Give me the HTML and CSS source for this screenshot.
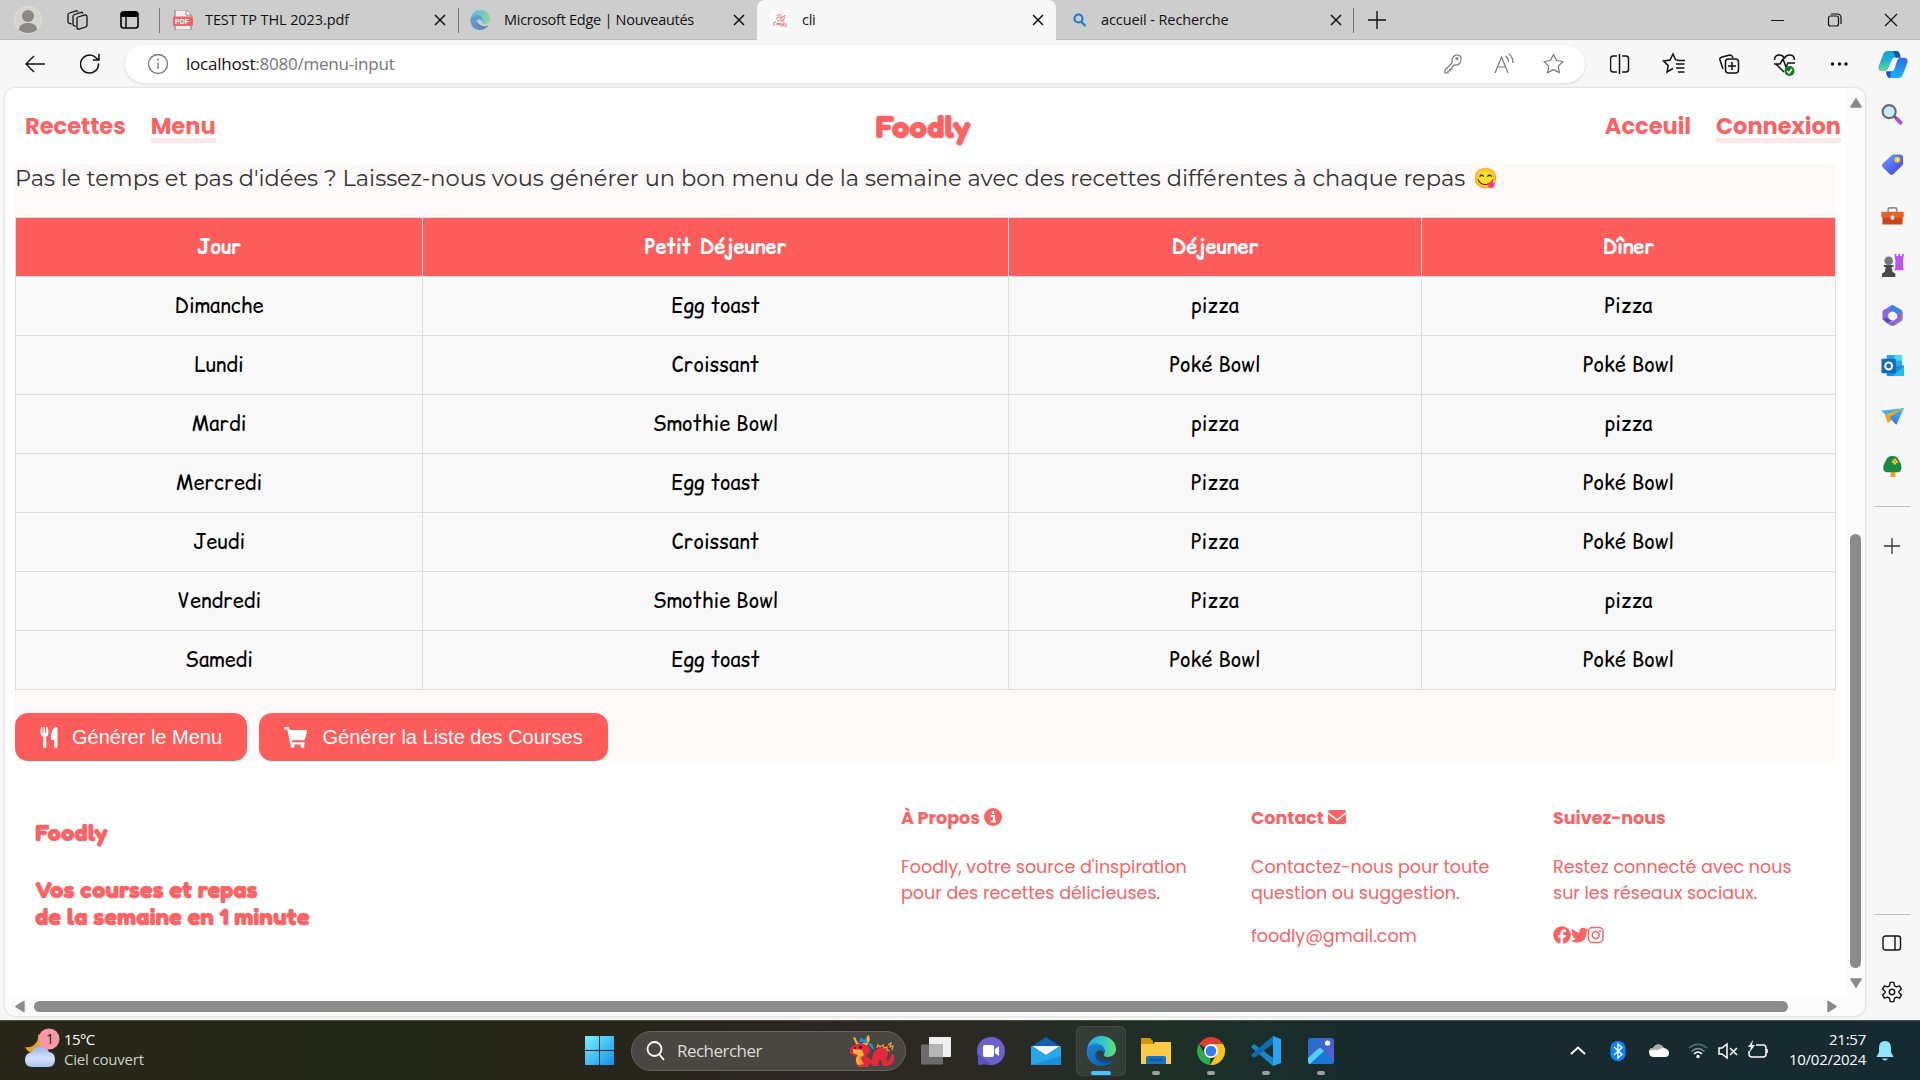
FILE: index.html
```html
<!DOCTYPE html>
<html lang="fr">
<head>
<meta charset="utf-8">
<title>cli</title>
<link rel="stylesheet" href="styles.css">
</head>
<body>
<svg class="defs" width="0" height="0">
  <defs>
    <linearGradient id="edge-a" x1="0" y1="0" x2="1" y2="0"><stop offset="0" stop-color="#2aa6e8"/><stop offset=".6" stop-color="#35c9c6"/><stop offset="1" stop-color="#6be063"/></linearGradient>
    <linearGradient id="edge-b" x1="0" y1="0" x2="1" y2="1"><stop offset="0" stop-color="#1b86d8"/><stop offset="1" stop-color="#0f55a6"/></linearGradient>
    <linearGradient id="win" x1="0" y1="0" x2="1" y2="1"><stop offset="0" stop-color="#7df0ff"/><stop offset="1" stop-color="#0c92f0"/></linearGradient>
    <linearGradient id="cop-a" x1="0" y1="0" x2="0" y2="1"><stop offset="0" stop-color="#129ddd"/><stop offset=".5" stop-color="#1db5c8"/><stop offset="1" stop-color="#6fdc8c"/></linearGradient>
    <linearGradient id="cop-b" x1="0" y1="0" x2="0" y2="1"><stop offset="0" stop-color="#2d6ce8"/><stop offset="1" stop-color="#17b4fa"/></linearGradient>
    <linearGradient id="tag" x1="0" y1="0" x2="1" y2="1"><stop offset="0" stop-color="#6aa9fa"/><stop offset="1" stop-color="#4434ec"/></linearGradient>
    <linearGradient id="cloud" x1="0" y1="0" x2="0" y2="1"><stop offset="0" stop-color="#8fb5ee"/><stop offset=".6" stop-color="#d5e4fb"/><stop offset="1" stop-color="#a8c5f4"/></linearGradient>
    <linearGradient id="photo" x1="0" y1="0" x2="1" y2="1"><stop offset="0" stop-color="#1b6fd0"/><stop offset="1" stop-color="#7058c8"/></linearGradient>
    <linearGradient id="plane" x1="0" y1="0" x2="0" y2="1"><stop offset="0" stop-color="#3cc4f2"/><stop offset="1" stop-color="#2f6df0"/></linearGradient>
    <symbol id="i-x" viewBox="0 0 12 12"><path d="M1 1l10 10M11 1L1 11" fill="none" stroke="#111" stroke-width="1.5"/></symbol>
    <symbol id="i-edge" viewBox="0 0 30 30">
      <path d="M1 14C2 5 8 0 15 0c9 0 15 6 15 13 0 5-4 8-8 8-3 0-5-1-4-3 2-3 0-8-6-8C6 10 2 12 1 17z" fill="url(#edge-a)"/>
      <path d="M1 13C3 9 7 7 12 8c5 1 8 5 6 9-1-3-6-4-8 0-2 5 3 10 9 10 4 0 7-2 9-4-3 5-8 7-13 7C6 30-1 22 1 13z" fill="url(#edge-b)"/>
      <path d="M10 17c-2 5 3 10 9 10 4 0 7-2 9-4-4 2-9 2-12 0-3-1-4-4-6-6z" fill="#124a94"/>
    </symbol>
    <symbol id="i-tree" viewBox="0 0 24 24"><path d="M10 16h5v7h-5z" fill="#f0a020"/><path d="M12 1c4 0 6 2 7 5 2 3 3 6 2 9-1 3-3 3-5 3H8c-3 0-5-1-5.500-3C2 12 3 9 5 6c1-3 3-5 7-5z" fill="#1d8a42"/><path d="M14.500 4v6M11.500 7h6" stroke="#ffc83d" stroke-width="2.600"/><circle cx="14.500" cy="7" r="1.200" fill="#f08a00"/></symbol>
  </defs>
</svg>

<header class="tabs">
  <svg class="profile" viewBox="0 0 28 28"><circle cx="14" cy="14" r="13.5" fill="#d5d3d0" stroke="#e2e0dd"/><circle cx="14" cy="10" r="6" fill="#8b8783"/><path d="M5 24c0-5 4-7 9-7s9 2 9 7c-5 4-13 4-18 0z" fill="#8b8783"/></svg>
  <svg class="workspaces" viewBox="0 0 22 22" fill="none" stroke="#111" stroke-width="1.300"><path d="M12 8l7-2q2-.3 2 2v8q0 1.500-1.500 2L13 20q-2 .5-2-1.500V9.500q0-1.200 1-1.500z"/><path d="M10 17.500l-1.500-.5Q7 16.500 7 15V7.500Q7 6 8.500 5.500L15 3.500q1.500-.3 2 1"/><path d="M5.500 15l-2-.5Q2 14 2 12.500V6q0-1.500 1.500-2L10 2q1.500-.3 2 .5"/></svg>
  <svg class="tabmenu" viewBox="0 0 20 20"><rect x="1" y="2" width="17" height="16" rx="2.5" fill="none" stroke="#000" stroke-width="1.6"/><path d="M1 7V4q0-3 3-3h11q3 0 3 3v3z"/><path d="M6 7v11" stroke="#000" stroke-width="1.4"/></svg>
  <div class="tab tab-pdf">
    <svg class="fav" viewBox="0 0 20 20"><path d="M2 0h11l5 5v15H2z" fill="#eee" stroke="#8d8d8d" stroke-width="1.2"/><path d="M13 0v5h5" fill="#fff" stroke="#8d8d8d"/><rect y="6.500" width="20" height="9.500" rx="1" fill="#e66a6c"/><text x="2" y="14" class="pdf-label">PDF</text></svg>
    <span class="title t-pdf">TEST TP THL 2023.pdf</span><svg class="x"><use href="#i-x"/></svg>
  </div>
  <div class="tab tab-news">
    <svg class="fav faded" viewBox="0 0 30 30"><use href="#i-edge"/></svg>
    <span class="title t-news">Microsoft Edge | Nouveautés</span><svg class="x"><use href="#i-x"/></svg>
  </div>
  <div class="tab tab-cli">
    <svg class="fav" viewBox="0 0 20 20"><path d="M0 0h20v20H0z" fill="#fff"/><g fill="none" stroke="#f77f80" stroke-width="1.100"><path d="M7 6q3-3 4 0t4-1M6 9q4-4 5 0 2 3 4-2M7 10q3 2 7 0M4 12v4M4 12h2M7 14.500h3v-1H7zM11 14h2v2h-2zM14 12v4M16 13v3l-1 1"/></g></svg>
    <span class="title t-cli">cli</span><svg class="x"><use href="#i-x"/></svg>
  </div>
  <div class="tab tab-search">
    <svg class="fav-s" viewBox="0 0 13 14"><circle cx="5.500" cy="5.500" r="4" fill="none" stroke="#1a76cf" stroke-width="2"/><path d="M8.500 9l4 4" stroke="#1a76cf" stroke-width="2.200"/></svg>
    <span class="title t-search">accueil - Recherche</span><svg class="x"><use href="#i-x"/></svg>
  </div>
  <svg class="newtab" viewBox="0 0 18 18"><path d="M9 0v18M0 9h18" stroke="#111" stroke-width="1.400"/></svg>
  <svg class="winctl" viewBox="0 0 130 16" fill="none" stroke="#111" stroke-width="1.200"><path d="M0 8.500h13M114 2l12 12M126 2L114 14"/><rect x="57.500" y="4" width="10" height="10" rx="2"/><path d="M60 2h6q4 0 4 4v6"/></svg>
</header>

<section class="toolbar">
  <svg class="back" viewBox="0 0 20 18" fill="none" stroke="#111" stroke-width="1.400"><path d="M20 9H1M9 1L1 9l8 8"/></svg>
  <svg class="reload" viewBox="0 0 20 20" fill="none" stroke="#111" stroke-width="1.500"><path d="M18.500 9.500a9 9 0 1 1-2.800-6L18.500 6M19 0v6h-6"/></svg>
  <div class="address">
    <svg class="info" viewBox="0 0 22 22"><circle cx="11" cy="11" r="9.500" fill="none" stroke="#777" stroke-width="1.300"/><path d="M11 9.500v6.500" stroke="#777" stroke-width="1.400"/><circle cx="11" cy="6.500" r="1" fill="#777"/></svg>
    <span class="url"><span class="host">localhost</span><span class="path">:8080/menu-input</span></span>
    <svg class="addr-icons" viewBox="0 0 120 22" fill="none" stroke="#777" stroke-width="1.200"><path d="M8 10q-1-6 4-8 6 0 5 5-1 6-7 5l-2 2v2H6v2H4v2H1v-3z"/><circle cx="13" cy="5.500" r="1"/><path d="M51 20L57.500 4 64 20M53.500 14h8M61.500 3q3 2 3 6M65 1q4 3 4 9"/><path d="M109.500 1.500l3 6 6.500 1-4.700 4.600 1.100 6.600-5.900-3.100-5.900 3.100 1.100-6.600L100 8.500l6.500-1z" stroke-linejoin="round"/></svg>
  </div>
  <svg class="tools" viewBox="0 0 240 26" fill="none" stroke="#111" stroke-width="1.500">
    <path d="M7 5H3Q.5 5 .5 8v10q0 3 2.500 3h4M12 5h4q2.500 0 2.500 3v10q0 3-2.500 3h-4M9.500 3v20"/>
    <path d="M69 9.500l-3.500-.8L63 3l-3 6-6.500 1 4.700 4.600L57 21l6-3.500M66 13h8.500M66 17h8.500M68 21h6.500M69 9.500h6"/>
    <path d="M113 18l-3-9q-1-2 2-3l8-2q2 0 3 3"/><rect x="115.500" y="8" width="13" height="14" rx="3"/><path d="M122 11v8M118 15h8"/>
    <path d="M174 21l-8-8M164.500 9q0-5 5-5 3 0 5 3 2-3 5-3 5 0 5 5M164 13h6l3-5 3 8 2-4h7"/><circle cx="179.500" cy="20" r="5" fill="#127a19" stroke="none"/><path d="M177 20l2 2 3-4" stroke="#fff"/>
    <g fill="#111" stroke="none"><circle cx="222.500" cy="13" r="1.700"/><circle cx="229.500" cy="13" r="1.700"/><circle cx="236" cy="13" r="1.700"/></g>
  </svg>
  <svg class="copilot" viewBox="0 0 30 28"><path d="M5 3q1-3 5-3h8q3 0 4 4l-5 3q-3 0-4 4l-3 7q-1 3-4 3H4q-5 0-4-5z" fill="url(#cop-a)"/><path d="M25 25q-1 3-5 3h-8q-3 0-4-5l5-2q3 0 4-4l2-6q1-4 4-4h3q5 0 4 5z" fill="url(#cop-b)"/><path d="M15 0h4q3 0 4 7h-5z" fill="#14559c"/><path d="M8 21h5l-1 7q-3 0-4-5z" fill="#1a50d8"/></svg>
</section>

<div class="middle">
  <div class="frame">
    <div class="page">
      <nav class="nav">
        <div class="links"><a>Recettes</a><a class="on">Menu</a></div>
        <div class="logo">Foodly</div>
        <div class="links right"><a>Acceuil</a><a class="on">Connexion</a></div>
      </nav>
      <main class="main">
        <p class="intro">Pas le temps et pas d'idées ? Laissez-nous vous générer un bon menu de la semaine avec des recettes différentes à chaque repas <span class="emoji">😋</span></p>
        <table class="menu">
          <colgroup><col class="c1"><col class="c2"><col class="c3"><col class="c4"></colgroup>
          <thead><tr><th>Jour</th><th>Petit Déjeuner</th><th>Déjeuner</th><th>Dîner</th></tr></thead>
          <tbody>
            <tr><td>Dimanche</td><td>Egg toast</td><td>pizza</td><td>Pizza</td></tr>
            <tr><td>Lundi</td><td>Croissant</td><td>Poké Bowl</td><td>Poké Bowl</td></tr>
            <tr><td>Mardi</td><td>Smothie Bowl</td><td>pizza</td><td>pizza</td></tr>
            <tr><td>Mercredi</td><td>Egg toast</td><td>Pizza</td><td>Poké Bowl</td></tr>
            <tr><td>Jeudi</td><td>Croissant</td><td>Pizza</td><td>Poké Bowl</td></tr>
            <tr><td>Vendredi</td><td>Smothie Bowl</td><td>Pizza</td><td>pizza</td></tr>
            <tr><td>Samedi</td><td>Egg toast</td><td>Poké Bowl</td><td>Poké Bowl</td></tr>
          </tbody>
        </table>
        <div class="actions">
          <button class="btn b-menu"><svg class="i-fork" viewBox="0 0 18 21" fill="#fff"><path d="M1 0h1.500v6h1V0H5v6h1V0h1.600q1 4 .8 7-.3 2-2.400 3l.5 9q0 2-1.700 2T3 19l.4-9Q1 9 .6 7 .4 4 1 0zM17.500 1v18q0 2-1.700 2T14 19l.4-6H11q-.8-5 1-9 2-4 4.500-4 1 0 1 1z"/></svg>Générer le Menu</button>
          <button class="btn b-list"><svg class="i-cart" viewBox="0 0 23 21" fill="#fff"><path d="M0 1q0-1 1-1h3q1.200 0 1.500 1.500L5.800 3H22q1.300 0 1 1.300l-2 8q-.3 1-1.500 1H8l.4 2H20q1 0 .8 1.200-.2.900-1.200.9H7.500q-1.200 0-1.400-1.200L3.300 2.600H1Q0 2.500 0 1z"/><circle cx="8.500" cy="19" r="2"/><circle cx="18.500" cy="19" r="2"/></svg>Générer la Liste des Courses</button>
        </div>
      </main>
      <footer class="footer">
        <div class="brand"><div class="b1">Foodly</div><div>Vos courses et repas</div><div>de la semaine en 1 minute</div></div>
        <div class="col">
          <h4><span>À Propos</span><svg class="hi" viewBox="0 0 18 18"><circle cx="9" cy="9" r="9" fill="#fa6263"/><path d="M9 3v3M6.500 8h3.500v5M6.500 13.500h5.500" stroke="#fff" stroke-width="2.200" fill="none"/></svg></h4>
          <p>Foodly, votre source d'inspiration</p><p>pour des recettes délicieuses.</p>
        </div>
        <div class="col">
          <h4><span>Contact</span><svg class="hi" viewBox="0 0 18 18"><path d="M2 2h14q2 0 2 2l-9 7L0 4q0-2 2-2zM0 6l9 7 9-7v8q0 2-2 2H2q-2 0-2-2z" fill="#fa6263"/></svg></h4>
          <p>Contactez-nous pour toute</p><p>question ou suggestion.</p><p class="mail">foodly@gmail.com</p>
        </div>
        <div class="col">
          <h4><span>Suivez-nous</span></h4>
          <p>Restez connecté avec nous</p><p>sur les réseaux sociaux.</p>
          <svg class="social" viewBox="0 0 51 18"><circle cx="9" cy="9" r="8.800" fill="#fa6263"/><path d="M7.500 18v-6.500H5V9h2.500V7q0-3.500 3.500-3.500h2V6h-1.500q-1.300 0-1.300 1.300V9H13l-.5 2.500h-2.300V18z" fill="#fff"/><path d="M18 14.500q3 .2 5-1.400-2.500-.3-3.300-2.600h1.500Q18.600 9.500 18.500 7l1.500.4Q17.500 5 19 2.500q3 3.700 7.500 4Q26 2 30 1.800q1.500 0 2.600 1.200l2.300-.9q-.3 1.200-1.600 2l2-.5-1.700 1.900Q33.800 16.500 23.500 16.500q-3 0-5.500-2z" fill="#fa6263"/><rect x="35.500" y="1.500" width="14.500" height="15" rx="4" fill="none" stroke="#fa6263" stroke-width="1.500"/><circle cx="42.700" cy="9" r="3.500" fill="none" stroke="#fa6263" stroke-width="1.500"/><circle cx="47" cy="5" r="1" fill="#fa6263"/></svg>
        </div>
      </footer>
    </div>
    <div class="vscroll"><svg class="ar" viewBox="0 0 12 10"><path d="M6 1l5 8H1z"/></svg><div class="vthumb"></div><svg class="ar" viewBox="0 0 12 10"><path d="M6 9l5-8H1z"/></svg></div>
    <div class="hscroll"><svg class="ah" viewBox="0 0 10 12"><path d="M1 6l8-5v10z"/></svg><div class="hthumb"></div><svg class="ah" viewBox="0 0 10 12"><path d="M9 6L1 1v10z"/></svg></div>
  </div>
  <aside class="side">
    <svg viewBox="0 0 24 24"><path d="M16.500 16.500l4 4" stroke="#c83df0" stroke-width="4" stroke-linecap="round"/><path d="M13 13l3 3" stroke="#555" stroke-width="2.500"/><circle cx="8.500" cy="9" r="6.800" fill="#cdeaff" stroke="#6b6b6b" stroke-width="2.200"/></svg>
    <svg viewBox="0 0 24 24"><path d="M13.500 1.500H20q3 0 3 3V11q0 1-1 2l-9 9q-2 2-4 0l-7-7q-2-2 0-4l9-8.500q1-1 2.500-1z" fill="url(#tag)"/><circle cx="17" cy="7" r="2.200" fill="#f4f0e0" stroke="#f8c71e" stroke-width="2"/></svg>
    <svg viewBox="0 0 24 24"><path d="M7.500 8V5.500Q7.500 4 9 4h6q1.500 0 1.500 1.500V8" fill="none" stroke="#8c9093" stroke-width="1.800"/><rect x="1.500" y="11" width="21" height="10.500" rx="1" fill="#c8461b"/><rect x=".3" y="8" width="23.400" height="6" rx="1" fill="#e4612a"/><rect x="10" y="12" width="4" height="4.500" rx="1" fill="#d9dcde"/></svg>
    <svg viewBox="0 0 24 24"><path d="M14 0h2v2h2V0h2v2h2V0h2l-1 6v8l1 3h-10l1-3V6z" fill="#c050f5"/><circle cx="8" cy="7" r="4.500" fill="#777"/><path d="M3 11.500h10v2h-2l1 5 3 2V24H1v-3.500l3-2 1-5H3z" fill="#4a4a4a"/></svg>
    <svg viewBox="0 0 24 24"><path d="M12 1L3 6q-1.500 1-1.500 2.500V16L8 17V11q0-1.500 1-2l7-4z" fill="#8a6ae0"/><path d="M10 2q2-2 4 0l8 4.500V16l-5-3v-2L12 7.500 9 9z" fill="#3a86e0"/><path d="M22.500 8v7.500q0 1.500-1.500 2.500l-7 4.500q-2 1-4 0L5 19l7-1 5-3.500V10z" fill="#8f6bc4"/><path d="M1.500 16l5-2 6 3-6 3z" fill="#5a50c0"/><circle cx="12" cy="12.500" r="4.500" fill="#f7f7f7"/></svg>
    <svg viewBox="0 0 24 24"><path d="M6 1h16v12H6z" fill="#28a8ea"/><path d="M14 1h8v6h-8z" fill="#50d9ff"/><path d="M6 12h18v11H6z" fill="#1490df"/><path d="M12 23l12-10v10z" fill="#28b8f4"/><rect x=".5" y="5" width="15" height="15" rx="1" fill="#0f6cbd"/><circle cx="8" cy="12.500" r="3.600" fill="none" stroke="#fff" stroke-width="2.100"/></svg>
    <svg viewBox="0 0 24 24"><path d="M0 6l24-3-8 17.500-8-8z" fill="url(#plane)"/><path d="M24 3L4 10l3 9 3-7z" fill="#f2a51c"/><path d="M10 12l-3 7 4-4z" fill="#d88510"/></svg>
    <svg viewBox="0 0 24 24"><use href="#i-tree"/></svg>
    <div class="rule"></div>
    <svg class="plus" viewBox="0 0 16 16"><path d="M8 0v16M0 8h16" stroke="#333" stroke-width="1.300"/></svg>
    <div class="rule low"></div>
    <svg class="panel" viewBox="0 0 20 16" fill="none" stroke="#111" stroke-width="1.400"><rect x="1" y="1" width="17.500" height="14" rx="2.500"/><path d="M13 1v14"/></svg>
    <svg class="gear" viewBox="0 0 24 24" fill="none" stroke="#111" stroke-width="1.500" stroke-linejoin="round"><path d="M10 1.500h4l.8 3.800 2 1.200 3.600-1.200 2 3.500-2.800 2.400v1.600l2.800 2.400-2 3.500-3.600-1.200-2 1.200-.8 3.800h-4l-.8-3.800-2-1.200-3.600 1.200-2-3.500 2.800-2.400v-1.600L1.600 8.800l2-3.500 3.600 1.200 2-1.200z"/><circle cx="12" cy="12" r="3"/></svg>
  </aside>
</div>

<footer class="taskbar">
  <div class="weather">
    <svg class="wx" viewBox="0 0 36 42"><path d="M14 7q1 6-3 10-4 4-10 3 4 8 13 6 6-4 6-12z" fill="#f0a020"/><path d="M8 40q-7 0-7-7t7-8q2-6 8-6 7 0 9 6 6 1 6 7 0 8-7 8z" fill="url(#cloud)"/><circle cx="25" cy="12" r="10.500" fill="#ff96a4"/><text x="22" y="17" class="badge">1</text></svg>
    <div class="wtext"><span class="deg">15°C</span><span class="sky">Ciel couvert</span></div>
  </div>
  <div class="dock">
    <svg class="start" viewBox="0 0 30 30" fill="url(#win)"><path d="M1 1h13.500v13.500H1zM15.500 1H29v13.500H15.500zM1 15.500h13.500V29H1zM15.500 15.500H29V29H15.500z"/></svg>
    <div class="search"><svg class="glass" viewBox="0 0 20 20" fill="none" stroke="#fff" stroke-width="1.800"><circle cx="8.500" cy="8" r="7"/><path d="M13 13l5 6"/></svg><span>Rechercher</span>
      <svg class="dragon" viewBox="0 0 44 32"><path d="M7 11L3 3l2-1 3 6 3 1 5-2 1-6 2-1 1 5-3 6z" fill="#f3b02c"/><path d="M9 7l2-5 3 3 2-3 1 5 5 2 3 6-4-2-3-5z" fill="#1d8fe0"/><path d="M2 12q4-4 11-3 7 1 7 8l-4 4 6 4q0-9 7-12 8-2 9 5 0 4-2 6l2 2q4-3 3-7l3 1q1 7-4 10l-4 1h-3l-2-6-3 1 1 5h-6l-3-3-2 4-8 1q-6-4-4-11l-5-3q-3-2-1-6z" fill="#e4283e"/><path d="M3 14l9 1 2 5-4 3 4 6-6 1q-4-5 0-10l-5-2z" fill="#f6b637"/><path d="M8 22h4M8 25h4M9 28h4" stroke="#d8802c"/><circle cx="10.500" cy="12" r="1.500" fill="#123"/><circle cx="5" cy="13" r="1" fill="#123"/><path d="M27 13l1-3 2 2 3-2 1 3 3-1v3l3 1M38 10l3-2-1 4 3-1-1 4" stroke="#ff9a3c" stroke-width="1.300" fill="none"/></svg></div>
    <div class="app"><svg viewBox="0 0 30 30"><rect x="8" y="1" width="22" height="20" rx="1" fill="#f0f0f0"/><rect x="0" y="8.500" width="22" height="20" rx="1" fill="#6c6c6c"/><path d="M8 8.500h14V21H8z" fill="#b5b5b5"/></svg></div>
    <div class="app"><svg viewBox="0 0 30 30"><circle cx="15" cy="15" r="14" fill="#6a62cc"/><path d="M2 17v12l12-1z" fill="#5a50c0"/><rect x="7" y="9" width="11" height="12" rx="2" fill="#fff"/><path d="M19 13l4-3v10l-4-3z" fill="#fff"/></svg></div>
    <div class="app"><svg viewBox="0 0 30 30"><path d="M0 11L15 1l15 10-3 8H3z" fill="#0f5eb0"/><path d="M0 10l15 9 15-9v19H0z" fill="#28a8ea"/><path d="M1 10h28l-14 9z" fill="#f3f3f3"/><path d="M0 29l30-9v9z" fill="#1b8fdf"/></svg></div>
    <div class="app active"><svg viewBox="0 0 30 30"><use href="#i-edge"/></svg><i></i></div>
    <div class="app"><svg viewBox="0 0 30 30"><path d="M0 3q0-1 1-1h8l3 3v8H0z" fill="#d9940a"/><path d="M0 8h12l2-2h16v22H0z" fill="#fdca45"/><path d="M5 28v-6q0-2 2-2h16q2 0 2 2v6z" fill="#1673c4"/><path d="M9 24h12" stroke="#0c4f92" stroke-width="1.500"/></svg><i></i></div>
    <div class="app"><svg viewBox="0 0 30 30"><path d="M15 15L2.900 8A14 14 0 0 1 27.100 8H15z" fill="#e33b2e"/><path d="M15 15l-1 14A14 14 0 0 1 2.900 8l6 10z" fill="#2da94f"/><path d="M15 8h12.100A14 14 0 0 1 14 29l7-11z" fill="#fcc31e"/><circle cx="15" cy="15" r="7" fill="#fff"/><circle cx="15" cy="15" r="5.300" fill="#2f7de9"/></svg><i></i></div>
    <div class="app"><svg viewBox="0 0 30 30"><path d="M0 11l3-3 19 14v8z" fill="#1686d0"/><path d="M0 19l3 3L22 8V0z" fill="#0f6cb4"/><path d="M22 0l8 3v24l-8 3z" fill="#2ba3f0"/></svg><i></i></div>
    <div class="app"><svg viewBox="0 0 30 30"><rect x="2" y="2" width="26" height="26" rx="3" fill="url(#photo)"/><path d="M2 22l10-9q2-2 4 0l12 12q0 3-3 3H5q-3 0-3-3z" fill="#1679d8"/><path d="M2 22l10-9q2-2 4 0l2 2L4 28q-2 0-2-3z" fill="#4fd0ff"/><circle cx="21.500" cy="7" r="2.600" fill="#fff"/></svg><i></i></div>
  </div>
  <div class="tray">
    <svg class="trayicons" viewBox="0 0 200 24" fill="none" stroke="#fff" stroke-width="1.500">
      <path d="M1 15l7-6.500L15 15" stroke-width="2"/>
      <rect x="40.500" y="2" width="15" height="20" rx="7" fill="#0a84ff" stroke="none"/><path d="M44 8l8 7.500-4 3.500V5l4 3.500L44 16" stroke-width="1.400"/>
      <path d="M84 18q-5 0-5-5 0-4 4-4 3-5 8-3l3 3q5 1 5 5t-4 4z" fill="#fff" stroke="none"/><path d="M79 12q1-3 4-3 3-5 8-3l3 3q-4 0-6 2-4-1-9 1z" fill="#aaa" stroke="none"/>
      <path d="M119 9q9-7.500 18 0" stroke="#5c6b70"/><path d="M121.500 12.500q6.500-6 13 0" stroke="#849094"/><path d="M124 15q4-4 8 0"/><circle cx="128" cy="17.500" r="1.700" fill="#fff" stroke="none"/>
      <path d="M149 9h3l5-4v14l-5-4h-3zM160 9l7 7M167 9l-7 7"/>
      <path d="M186 6h7q3 0 3 3v6q0 3-3 3h-11q-3 0-3-3v-3M197 10v4"/><path d="M183 1l-5 7h3l-2 6 6-8h-3z" fill="#fff" stroke="none"/>
    </svg>
    <div class="clock"><span class="time">21:57</span><span class="date">10/02/2024</span></div>
    <svg class="bell" viewBox="0 0 18 20" fill="#8fe5ff"><path d="M9 0q6 0 6 7v4l2.500 5H.5L3 11V7q0-7 6-7zM6 17.500h6q-1 2-3 2t-3-2z"/></svg>
  </div>
</footer>
</body>
</html>
```
FILE: styles.css
```css
* { box-sizing: border-box; }
body { margin: 0; width: 1920px; height: 1080px; overflow: hidden; display: flex; flex-direction: column; background: #f7f7f7; font-family: "Open Sans", sans-serif; color: #111; }
svg { display: block; flex: none; }
p, h4 { margin: 0; }
.defs { position: absolute; }

/* tab strip */
.tabs { height: 40px; flex: none; display: flex; align-items: center; background: #cdcdcd; box-shadow: inset 0 -1px #bbb; }
.profile { width: 28px; height: 28px; margin-left: 14px; }
.workspaces { width: 22px; height: 22px; margin-left: 24px; }
.tabmenu { width: 20px; height: 20px; margin-left: 32px; }
.tab { height: 40px; display: flex; align-items: center; }
.tab .x { width: 12px; height: 12px; margin-left: auto; margin-right: 12.5px; }
.tab-pdf, .tab-news { background: linear-gradient(#777, #777) 0 8px / 1px 25px no-repeat; }
.tab-pdf { width: 299px; margin-left: 19px; padding-left: 14px; }
.tab-news { width: 299px; padding-left: 12px; }
.tab-cli { width: 299px; background: #f7f7f7; border-radius: 8px 8px 0 0; padding-left: 13px; }
.tab-search { width: 298px; padding-left: 17px; background: linear-gradient(#777, #777) 297px 8px / 1px 25px no-repeat; }
.fav { width: 20px; height: 20px; }
.fav-s { width: 13px; height: 14px; }
.faded { opacity: .6; }
.pdf-label { font: 700 7px "Liberation Sans", sans-serif; fill: #fff; }
.title { font-size: 14.5px; line-height: 20px; white-space: nowrap; margin-left: 12px; }
.t-pdf { letter-spacing: -.09px; }
.t-news { margin-left: 14px; letter-spacing: -.27px; }
.t-search { margin-left: 15px; letter-spacing: -.1px; }
.t-cli { letter-spacing: -.3px; }
.newtab { width: 18px; height: 18px; margin-left: 14px; }
.winctl { width: 130px; height: 16px; margin-left: auto; margin-right: 19px; }

/* toolbar */
.toolbar { height: 48px; flex: none; display: flex; align-items: center; }
.back { width: 20px; height: 18px; margin-left: 25px; }
.reload { width: 20px; height: 20px; margin-left: 35px; }
.address { width: 1460px; height: 38px; margin-left: 25px; margin-top: -1px; border-radius: 19px; background: #fff; box-shadow: 0 1px 3px #0002; display: flex; align-items: center; }
.info { width: 22px; height: 22px; margin-left: 22px; }
.url { font-size: 17px; margin-left: 17px; white-space: nowrap; letter-spacing: -.22px; line-height: 22px; }
.path { color: #767676; }
.addr-icons { width: 120px; height: 22px; margin-left: auto; margin-right: 21px; }
.tools { width: 240px; height: 26px; margin-left: 25px; }
.copilot { width: 30px; height: 27px; margin-left: 28px; }

/* browser frame */
.middle { height: 932px; flex: none; display: flex; }
.frame { width: 1860px; height: 928px; margin-left: 5px; background: #fcfcfc; border-radius: 10px; overflow: hidden; box-shadow: 0 0 3px #0003; display: grid; grid-template: 909px 19px / 1841px 19px; }
.page { background: #fff; overflow: hidden; }
.vscroll { display: flex; flex-direction: column; align-items: center; padding: 10px 0 9px; grid-column: 2; }
.hscroll { display: flex; align-items: center; padding: 0 9px 0 10px; }
.ar { width: 14px; height: 10px; }
.ah { width: 10px; height: 13px; }
.ar path, .ah path { fill: #8b8b8b; stroke: #8b8b8b; stroke-width: 1.5; stroke-linejoin: round; }
.vthumb { width: 11px; height: 434px; border-radius: 6px; background: #8b8b8b; margin: auto 0 10px; }
.hthumb { height: 11px; width: 1754px; border-radius: 6px; background: #8b8b8b; margin: 0 auto 0 9px; }

/* site navigation */
.nav { height: 76px; display: grid; grid-template-columns: 1fr auto 1fr; padding: 0 5px 0 20px; color: #fa6263; }
.links { display: flex; gap: 25px; padding-top: 26px; font: 700 22.5px/25px Poppins, Inter, sans-serif; }
.links a { height: 29px; }
.links .on { border-bottom: 5px solid #ffe8ea; }
.right { justify-content: flex-end; }
.logo, .brand { font-family: Fredoka, Inter, sans-serif; font-weight: 700; color: #fa6263; }
.logo { font-size: 31.5px; line-height: 36px; padding-top: 20px; margin-left: -20px; -webkit-text-stroke: .5px #fa6263; }

/* menu page */
.main { width: 1821px; height: 597px; margin-left: 10px; background: #fdf9f8; }
.intro { font: 400 22.5px/27px Montserrat, Inter, sans-serif; color: #333; height: 53px; padding-top: 1px; white-space: nowrap; }
.emoji { font-size: 20px; margin-left: 2px; vertical-align: 1px; line-height: 20px; }
.menu { width: 1821px; table-layout: fixed; border-collapse: collapse; font: 400 20px/26px "Comic Relief", "Comic Neue", cursive; color: #000; text-align: center; }
.menu th, .menu td { height: 59px; padding: 0; border: 1px solid #ddd; }
.menu th { background: #ff5c5c; color: #fff; font-weight: 700; }
.menu td { background: #f8f8f8; }
.c1 { width: 407px; }
.c2 { width: 586px; }
.c3 { width: 413px; }
.c4 { width: 414px; }
.actions { display: flex; gap: 12px; margin-top: 23px; }
.btn { height: 48px; border: 0; border-radius: 13px; background: #ff5c5c; color: #fff; font: 400 20px/24px "Liberation Sans", sans-serif; display: flex; align-items: center; padding: 0 0 0 25px; text-align: left; white-space: nowrap; }
.b-menu { width: 232px; gap: 14px; }
.b-list { width: 349px; gap: 15.5px; }
.i-fork { width: 18px; height: 21px; }
.i-cart { width: 23px; height: 21px; }

/* site footer */
.footer { height: 236px; display: grid; grid-template-columns: 866px 350px 302px 1fr; padding-left: 30px; color: #fa6263; }
.brand { font-size: 24px; line-height: 27px; padding-top: 58px; white-space: nowrap; -webkit-text-stroke: .4px #fa6263; }
.b1 { margin-bottom: 30px; }
.col { padding-top: 44px; font: 400 17.5px/26px Poppins, Inter, sans-serif; }
.col h4 { font-weight: 700; font-size: 17.5px; display: flex; align-items: center; gap: 4.5px; margin-bottom: 23px; }
.hi { width: 18px; height: 18px; margin-top: -2px; }
.col p { white-space: nowrap; }
.mail { margin-top: 17px; }
.social { width: 51px; height: 18px; margin-top: 20px; }

/* edge sidebar */
.side { width: 54px; display: flex; flex-direction: column; align-items: center; padding-top: 15px; }
.side svg { width: 23px; height: 23px; margin-bottom: 27.300px; }
.side .rule { width: 35px; height: 1px; background: #bbb; margin-top: 1px; }
.side .plus { width: 16px; height: 16px; margin: 31px 0 0; }
.side .low { margin-top: 360px; }
.side .panel { width: 20px; height: 16px; margin: 20px 0 0; }
.side .gear { width: 22px; height: 22px; margin: 30px 0 0; }

/* taskbar */
.taskbar { height: 60px; flex: none; display: flex; align-items: center; color: #fff; background: linear-gradient(90deg, #29271a 0, #232817 20%, #28261a 32%, #2c2624 42%, #2a2a24 52%, #1c3028 62%, #172b2e 72%, #162b31 100%); border-top: 1px solid #4a4d45; }
.weather { display: flex; width: 584px; padding-left: 24px; }
.wx { width: 36px; height: 42px; margin-top: -5px; }
.badge { font: 14px "Open Sans", sans-serif; fill: #222; }
.wtext { display: flex; flex-direction: column; font-size: 15px; line-height: 20px; padding-left: 4px; margin-top: -3px; }
.deg { letter-spacing: -.6px; }
.sky { letter-spacing: -.18px; color: #cfcfca; }
.dock { display: flex; align-items: center; }
.start { width: 31px; height: 31px; }
.search { width: 275px; height: 40px; margin: 0 2px 0 16px; border-radius: 20px; background: #4a4642; border: 1px solid #66625e; display: flex; align-items: center; padding-left: 14px; font-size: 17px; letter-spacing: -.52px; color: #ddd; }
.glass { width: 20px; height: 20px; margin-right: 11px; }
.dragon { width: 44px; height: 32px; margin-left: auto; margin-right: 11px; }
.app { width: 50px; height: 50px; margin: 0 2.500px; border-radius: 6px; display: flex; flex-direction: column; align-items: center; padding-top: 10px; }
.app svg { width: 30px; height: 30px; }
.app i { width: 8px; height: 4px; border-radius: 2px; background: #9aa09d; margin-top: 5px; }
.active { background: #ffffff14; box-shadow: inset 0 0 0 1px #ffffff12; }
.active i { width: 20px; background: #4cc2ff; }
.tray { display: flex; align-items: center; margin-left: auto; margin-right: 26px; }
.trayicons { width: 200px; height: 24px; }
.clock { display: flex; flex-direction: column; width: 96px; text-align: right; font-size: 15px; line-height: 20px; letter-spacing: -.26px; margin-top: -4px; }
.bell { width: 18px; height: 20px; margin-left: 10px; }
```
